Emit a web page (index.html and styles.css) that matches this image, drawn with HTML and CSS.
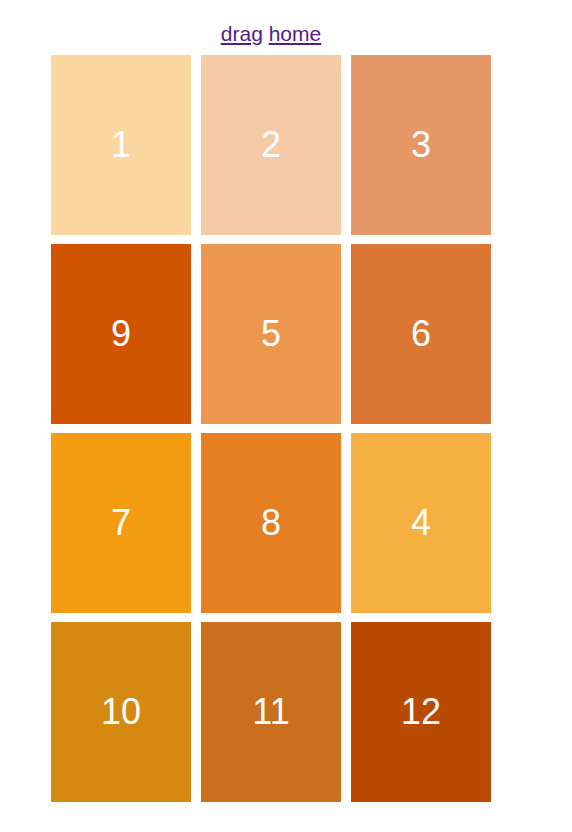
FILE: index.html
```html
<!DOCTYPE html>
<html lang="en">
<head>
    <meta charset="UTF-8">
    <meta name="viewport" content="width=device-width, initial-scale=1.0">
    <title>Drag</title>
    <link rel="stylesheet" href="styles.css">
</head>
<body>
    <div class="page">
        <nav class="links">
            <a href="#">drag</a>
            <a href="#">home</a>
        </nav>
        <div class="grid">
            <div class="box c1">1</div>
            <div class="box c2">2</div>
            <div class="box c3">3</div>
            <div class="box c9">9</div>
            <div class="box c5">5</div>
            <div class="box c6">6</div>
            <div class="box c7">7</div>
            <div class="box c8">8</div>
            <div class="box c4">4</div>
            <div class="box c10">10</div>
            <div class="box c11">11</div>
            <div class="box c12">12</div>
        </div>
    </div>
</body>
</html>
```

FILE: styles.css
```css
body {
    margin: 8px;
    font-family: "Liberation Sans", Arial, sans-serif;
    background-color: #fff;
}

.page {
    width: 440px;
    margin-left: 43px;
    padding-top: 14px;
}

.links {
    text-align: center;
    font-size: 21px;
    height: 24px;
    margin-bottom: 9px;
}

.links a {
    color: #551a8b;
}

.grid {
    display: grid;
    grid-template-columns: repeat(3, 140px);
    grid-auto-rows: 180px;
    column-gap: 10px;
    row-gap: 9px;
}

.box {
    display: flex;
    justify-content: center;
    align-items: center;
    color: #fff;
    font-size: 36px;
}

.c1 { background-color: #fad7a0; }
.c2 { background-color: #f5cba7; }
.c3 { background-color: #e59866; }
.c4 { background-color: #f5b041; }
.c5 { background-color: #eb984e; }
.c6 { background-color: #dc7633; }
.c7 { background-color: #f39c12; }
.c8 { background-color: #e67e22; }
.c9 { background-color: #d35400; }
.c10 { background-color: #d68910; }
.c11 { background-color: #ca6f1e; }
.c12 { background-color: #ba4a00; }
```
